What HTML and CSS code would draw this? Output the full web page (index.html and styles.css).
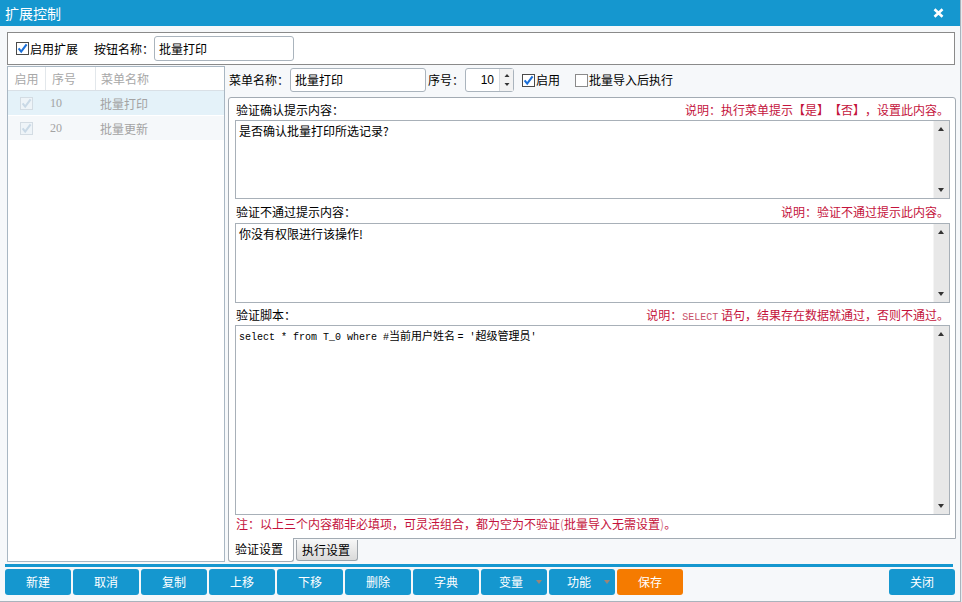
FILE: index.html
```html
<!DOCTYPE html>
<html lang="zh">
<head>
<meta charset="utf-8">
<title>扩展控制</title>
<link rel="stylesheet" href="styles.css">
</head>
<body>
<div class="window">
  <div class="titlebar">
    <span class="title">扩展控制</span>
    <svg class="close" width="11" height="10" viewBox="0 0 11 10"><path d="M1.5 1.2 L9.5 8.8 M9.5 1.2 L1.5 8.8" stroke="#fff" stroke-width="2.6" fill="none"/></svg>
  </div>
  <div class="content">
    <div class="toppanel">
      <span class="chk">
        <svg class="cb" width="13" height="13" viewBox="0 0 13 13"><rect x="0.5" y="0.5" width="12" height="12" fill="#fff" stroke="#4a4a4a"/><path d="M2.6 6.4 L5.2 9.6 L10.6 2.4" fill="none" stroke="#1b6fd8" stroke-width="2.1"/></svg>启用扩展
      </span>
      <span class="lbl lbl-btn">按钮名称：</span>
      <div class="input input-btn">批量打印</div>
    </div>
    <div class="main">
      <div class="grid">
        <div class="grow head">
          <div class="c1">启用</div><div class="c2">序号</div><div class="c3">菜单名称</div>
        </div>
        <div class="grow sel">
          <div class="c1"><svg class="cb" width="13" height="13" viewBox="0 0 13 13"><rect x="0.5" y="0.5" width="12" height="12" fill="#eef4f8" stroke="#d3dce3"/><path d="M2.6 6.4 L5.2 9.6 L10.6 2.4" fill="none" stroke="#c9d9e6" stroke-width="2.1"/></svg></div>
          <div class="c2 num">10</div><div class="c3">批量打印</div>
        </div>
        <div class="grow alt">
          <div class="c1"><svg class="cb" width="13" height="13" viewBox="0 0 13 13"><rect x="0.5" y="0.5" width="12" height="12" fill="#eef4f8" stroke="#d3dce3"/><path d="M2.6 6.4 L5.2 9.6 L10.6 2.4" fill="none" stroke="#c9d9e6" stroke-width="2.1"/></svg></div>
          <div class="c2 num">20</div><div class="c3">批量更新</div>
        </div>
      </div>
      <div class="right">
        <div class="formrow">
          <span class="lbl">菜单名称：</span>
          <div class="input input-name">批量打印</div>
          <span class="lbl lbl-seq">序号：</span>
          <div class="spin">
            <span class="spin-val">10</span>
            <span class="spin-btns">
              <svg width="14" height="22" viewBox="0 0 14 22"><path d="M4.5 8 L7 5 L9.5 8 Z" fill="#333"/><path d="M4.5 14 L7 17 L9.5 14 Z" fill="#333"/></svg>
            </span>
          </div>
          <span class="chk chk-en">
            <svg class="cb" width="13" height="13" viewBox="0 0 13 13"><rect x="0.5" y="0.5" width="12" height="12" fill="#fff" stroke="#4a4a4a"/><path d="M2.6 6.4 L5.2 9.6 L10.6 2.4" fill="none" stroke="#1b6fd8" stroke-width="2.1"/></svg>启用
          </span>
          <span class="chk chk-batch">
            <svg class="cb" width="13" height="13" viewBox="0 0 13 13"><rect x="0.5" y="0.5" width="12" height="12" fill="#fff" stroke="#8a8a8a"/></svg>批量导入后执行
          </span>
        </div>
        <div class="tabpanel">
          <div class="lrow r1"><span>验证确认提示内容：</span><span class="note">说明：执行菜单提示【是】【否】，设置此内容。</span></div>
          <div class="ta ta1"><div class="ta-text">是否确认批量打印所选记录?</div><div class="sb"><span class="up"></span><span class="down"></span></div></div>
          <div class="lrow r2"><span>验证不通过提示内容：</span><span class="note">说明：验证不通过提示此内容。</span></div>
          <div class="ta ta2"><div class="ta-text">你没有权限进行该操作!</div><div class="sb"><span class="up"></span><span class="down"></span></div></div>
          <div class="lrow r3"><span>验证脚本：</span><span class="note">说明：<span class="mono-note">SELECT</span> 语句，结果存在数据就通过，否则不通过。</span></div>
          <div class="ta ta3"><div class="ta-text code"><span class="mono">select * from T_0 where #</span>当前用户姓名 <span class="mono">= '</span>超级管理员<span class="mono">'</span></div><div class="sb"><span class="up"></span><span class="down"></span></div></div>
          <div class="footnote">注：以上三个内容都非必填项，可灵活组合，都为空为不验证<span class="paren">(</span>批量导入无需设置<span class="paren">)</span>。</div>
        </div>
        <div class="tabs">
          <div class="tab active">验证设置</div>
          <div class="tab">执行设置</div>
        </div>
      </div>
    </div>
    <div class="bluebar"></div>
    <div class="buttons">
      <div class="btn">新建</div>
      <div class="btn">取消</div>
      <div class="btn">复制</div>
      <div class="btn">上移</div>
      <div class="btn">下移</div>
      <div class="btn">删除</div>
      <div class="btn">字典</div>
      <div class="btn dd">变量<span class="caret"></span></div>
      <div class="btn dd">功能<span class="caret"></span></div>
      <div class="btn orange">保存</div>
      <div class="spacer"></div>
      <div class="btn">关闭</div>
    </div>
  </div>
</div>
</body>
</html>
```

FILE: styles.css
```css
* { box-sizing: border-box; }
html, body { margin: 0; padding: 0; }
body {
  width: 962px;
  height: 602px;
  background: #e6eaee;
  font-family: "Noto Sans CJK SC", "Liberation Sans", sans-serif;
  font-size: 12px;
  color: #000;
  overflow: hidden;
  text-spacing-trim: space-all;
}
.window {
  width: 961px;
  height: 602px;
  background: #f6f8fa;
  border-right: 1px solid #a9b3bc;
  border-bottom: 1px solid #a9b3bc;
  display: flex;
  flex-direction: column;
}
.titlebar {
  height: 26px;
  background: #1597cf;
  display: flex;
  align-items: center;
  justify-content: space-between;
  padding: 0 16px 0 5px;
  flex: none;
}
.title {
  color: #fff;
  font-size: 14px;
  line-height: 26px;
}
.close { display: block; }
.content {
  padding: 6px 5px 0 7px;
  display: flex;
  flex-direction: column;
}
.toppanel {
  height: 33px;
  background: #fff;
  border: 1px solid #8a8a8a;
  display: flex;
  align-items: center;
  padding-left: 8px;
}
.chk {
  display: inline-flex;
  align-items: center;
  white-space: nowrap;
}
.cb { display: block; flex: none; margin-right: 1px; }
.lbl { white-space: nowrap; }
.lbl-btn { margin-left: 16px; }
.input {
  height: 25px;
  border: 1px solid #aab4bd;
  border-radius: 3px;
  background: #fff;
  line-height: 23px;
  padding-left: 4px;
}
.input-btn { width: 140px; }

.main {
  margin-top: 1px;
  height: 496px;
  display: flex;
}
.grid {
  width: 218px;
  height: 496px;
  border: 1px solid #a9b7c3;
  background: #fff;
  flex: none;
}
.grow {
  display: flex;
  height: 25px;
  align-items: stretch;
  color: #a3a3a3;
}
.grow.head { height: 24px; border-bottom: 1px solid #d9e0e6; color: #a8a8a8; }
.grow.sel { background: #e4f2f9; border-bottom: 1px solid #fff; }
.grow.alt { background: #f5f8fa; border-bottom: 1px solid #fff; }
.grow > div { display: flex; align-items: center; }
.c1 { width: 38px; justify-content: center; border-right: 1px solid #e2e7eb; }
.c2 { width: 50px; padding-left: 6px; border-right: 1px solid #e2e7eb; }
.c3 { flex: 1; padding-left: 5px; }
.grow.sel .c1, .grow.sel .c2, .grow.alt .c1, .grow.alt .c2 { border-right-color: transparent; }
.num { font-family: "Liberation Serif", serif; font-size: 12px; padding-left: 4px !important; }
.grow.sel .c3, .grow.alt .c3 { padding-left: 4px; }

.right {
  margin-left: 2px;
  width: 729px;
  display: flex;
  flex-direction: column;
}
.formrow {
  height: 31px;
  display: flex;
  align-items: flex-start;
  padding-top: 2px;
  padding-left: 2px;
}
.formrow .lbl, .formrow .chk { line-height: 24px; height: 24px; }
.input-name { width: 136px; height: 24px; line-height: 22px; margin-left: 1px; }
.lbl-seq { margin-left: 2px; }
.spin {
  width: 49px;
  height: 24px;
  border: 1px solid #aab4bd;
  border-radius: 3px;
  background: #fff;
  display: flex;
  margin-left: 1px;
}
.spin-val {
  flex: 1;
  text-align: right;
  padding-right: 5px;
  line-height: 22px;
  font-family: "Liberation Sans", sans-serif;
}
.spin-btns {
  width: 14px;
  border-left: 1px solid #d6dbe0;
  background: #f2f2f2;
}
.spin-btns svg { display: block; }
.chk-en { margin-left: 8px; }
.chk-batch { margin-left: 15px; }

.tabpanel {
  margin-left: 1px;
  width: 728px;
  height: 442px;
  border: 1px solid #a3abb3;
  border-radius: 3px 3px 0 0;
  background: #fff;
  padding: 0 5px 0 6px;
  display: flex;
  flex-direction: column;
}
.lrow {
  display: flex;
  justify-content: space-between;
  align-items: center;
  padding-right: 1px;
  padding-left: 1px;
  flex: none;
}
.r1 { height: 22px; }
.r2 { height: 24px; }
.r3 { height: 22px; }
.note { color: #c4133c; }
.mono-note { font-family: "Liberation Mono", monospace; font-size: 10px; color: #c85068; }
.ta {
  border: 1px solid #a8b0b8;
  display: flex;
  flex: none;
  background: #fff;
}
.ta1 { height: 79px; }
.ta2 { height: 80px; }
.ta3 { height: 190px; }
.ta-text {
  flex: 1;
  padding: 1px 3px;
  line-height: 17px;
}
.code { font-size: 11px; padding-top: 1px; }
.mono { font-family: "Liberation Mono", monospace; font-size: 10px; }
.sb {
  width: 16px;
  background: #e8e8e8;
  border-left: 1px solid #f4f4f4;
  position: relative;
}
.sb .up, .sb .down {
  position: absolute;
  left: 4px;
  width: 0;
  height: 0;
  border-left: 3.5px solid transparent;
  border-right: 3.5px solid transparent;
}
.sb .up { top: 6px; border-bottom: 4px solid #333; }
.sb .down { bottom: 6px; border-top: 4px solid #333; }
.footnote {
  color: #c4133c;
  padding-left: 1px;
  line-height: 17px;
  height: 23px;
}
.paren { color: #d47c90; }

.tabs {
  display: flex;
  align-items: flex-start;
  margin-top: -1px;
  margin-left: 1px;
  height: 24px;
}
.tab {
  height: 24px;
  width: 66px;
  background: #fff;
  border: 1px solid #a3abb3;
  border-top: none;
  border-radius: 0 0 3px 3px;
  line-height: 22px;
  padding-left: 6px;
}
.tab + .tab {
  margin-left: 2px;
  margin-top: 2px;
  height: 21px;
  width: 62px;
  border: 1px solid #9ea4aa;
  border-top: none;
  background: linear-gradient(#f6f6f6, #dadada);
  line-height: 20px;
  padding-left: 5px;
}

.bluebar {
  margin-top: 2px;
  height: 3px;
  width: 948px;
  margin-left: -2px;
  background: #1597cf;
}
.buttons {
  margin-top: 2px;
  margin-left: -2px;
  display: flex;
  gap: 2px;
  height: 26px;
}
.btn {
  width: 66px;
  height: 26px;
  background: #1597cf;
  border-radius: 3px;
  color: #fff;
  text-align: center;
  line-height: 26px;
  position: relative;
}
.btn.dd { padding-right: 6px; }
.caret {
  position: absolute;
  right: 5px;
  top: 11px;
  width: 0;
  height: 0;
  border-left: 3.5px solid transparent;
  border-right: 3.5px solid transparent;
  border-top: 4px solid #9b8578;
}
.btn.orange { background: #f57b00; }
.spacer { flex: 1; }
```
